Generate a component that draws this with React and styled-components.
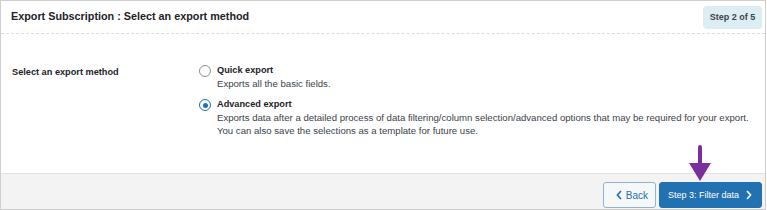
import React from "react";
import styled, { createGlobalStyle } from "styled-components";

const Global = createGlobalStyle`
  body {
    margin: 0;
    background: #fff;
    font-family: "Liberation Sans", Arial, sans-serif;
    color: #3c434a;
  }
`;

const Panel = styled.div`
  position: relative;
  box-sizing: border-box;
  width: 766px;
  height: 210px;
  border: 1px solid #cfcfcf;
  display: flex;
  flex-direction: column;
  background: #fff;
`;

const Header = styled.div`
  box-sizing: border-box;
  height: 33px;
  display: flex;
  align-items: center;
  justify-content: space-between;
  padding: 0 3px 0 10px;
  border-bottom: 1px dashed #dcdcdc;
`;

const Title = styled.h2`
  margin: 0;
  font-size: 10.8px;
  font-weight: 700;
  color: #1d2327;
  margin-top: -3px;
`;

const Badge = styled.span`
  box-sizing: border-box;
  width: 59px;
  height: 23px;
  display: flex;
  align-items: center;
  justify-content: center;
  background: #dcedf3;
  border-radius: 4px;
  font-size: 9px;
  font-weight: 700;
  color: #3c434a;
`;

const Body = styled.div`
  flex: 1;
  display: grid;
  grid-template-columns: 187px 1fr;
  padding: 30px 10px 0 11px;
`;

const Label = styled.div`
  font-size: 9.2px;
  font-weight: 700;
  color: #1d2327;
  padding-top: 3px;
`;

const Options = styled.div`
  display: flex;
  flex-direction: column;
  gap: 8px;
`;

const Option = styled.label`
  display: flex;
  gap: 6px;
  align-items: flex-start;
`;

const Radio = styled.span`
  box-sizing: border-box;
  flex: none;
  width: 12px;
  height: 12px;
  margin-top: 1px;
  border-radius: 50%;
  border: 1px solid ${(p) => (p.checked ? "#2271b1" : "#8c8f94")};
  display: flex;
  align-items: center;
  justify-content: center;
  &::after {
    content: "";
    width: 5px;
    height: 5px;
    border-radius: 50%;
    background: ${(p) => (p.checked ? "#2271b1" : "transparent")};
  }
`;

const OptText = styled.div`
  display: flex;
  flex-direction: column;
  line-height: 13px;
  white-space: nowrap;
`;

const OptTitle = styled.span`
  font-size: 9.2px;
  font-weight: 700;
  color: #1d2327;
`;

const Desc = styled.span`
  font-size: 9.6px;
  color: #3c434a;
`;

const Footer = styled.div`
  box-sizing: border-box;
  height: 36px;
  border-top: 1px solid #e2e2e2;
  background: #f3f3f3;
  display: flex;
  justify-content: flex-end;
  align-items: flex-start;
  gap: 3px;
  padding: 8px 3px 0 0;
`;

const Button = styled.button`
  box-sizing: border-box;
  height: 26px;
  display: flex;
  align-items: center;
  gap: ${(p) => (p.primary ? "7px" : "4px")};
  border-radius: 3px;
  font-family: inherit;
  font-size: ${(p) => (p.primary ? "9px" : "10px")};
  padding: ${(p) => (p.primary ? "0 9px 0 8px" : "0 7px 0 12px")};
  border: 1px solid ${(p) => (p.primary ? "#2271b1" : "#8fb3d4")};
  background: ${(p) => (p.primary ? "#2271b1" : "#f6f7f7")};
  color: ${(p) => (p.primary ? "#fff" : "#2271b1")};
`;

const Chevron = ({ dir }) => (
  <svg width="6" height="10" viewBox="0 0 6 10" fill="none">
    <path
      d={dir === "left" ? "M5 1 L1.4 5 L5 9" : "M1 1 L4.6 5 L1 9"}
      stroke="currentColor"
      strokeWidth="1.6"
    />
  </svg>
);

const Arrow = styled.svg`
  position: absolute;
  left: 688px;
  top: 144px;
`;

export default function App() {
  return (
    <>
      <Global />
      <Panel>
        <Header>
          <Title>Export Subscription : Select an export method</Title>
          <Badge>Step 2 of 5</Badge>
        </Header>
        <Body>
          <Label>Select an export method</Label>
          <Options>
            <Option>
              <Radio />
              <OptText>
                <OptTitle>Quick export</OptTitle>
                <Desc>Exports all the basic fields.</Desc>
              </OptText>
            </Option>
            <Option>
              <Radio checked />
              <OptText>
                <OptTitle>Advanced export</OptTitle>
                <Desc>
                  Exports data after a detailed process of data filtering/column selection/advanced options that may be required for your export.
                </Desc>
                <Desc>You can also save the selections as a template for future use.</Desc>
              </OptText>
            </Option>
          </Options>
        </Body>
        <Footer>
          <Button>
            <Chevron dir="left" />
            Back
          </Button>
          <Button primary>
            Step 3: Filter data
            <Chevron dir="right" />
          </Button>
        </Footer>
        <Arrow width="22" height="36" viewBox="0 0 22 36">
          <rect x="9" y="0" width="4" height="20" rx="2" fill="#7b2f9e" />
          <path d="M0 18 L22 18 L11 36 Z" fill="#7b2f9e" />
        </Arrow>
      </Panel>
    </>
  );
}
